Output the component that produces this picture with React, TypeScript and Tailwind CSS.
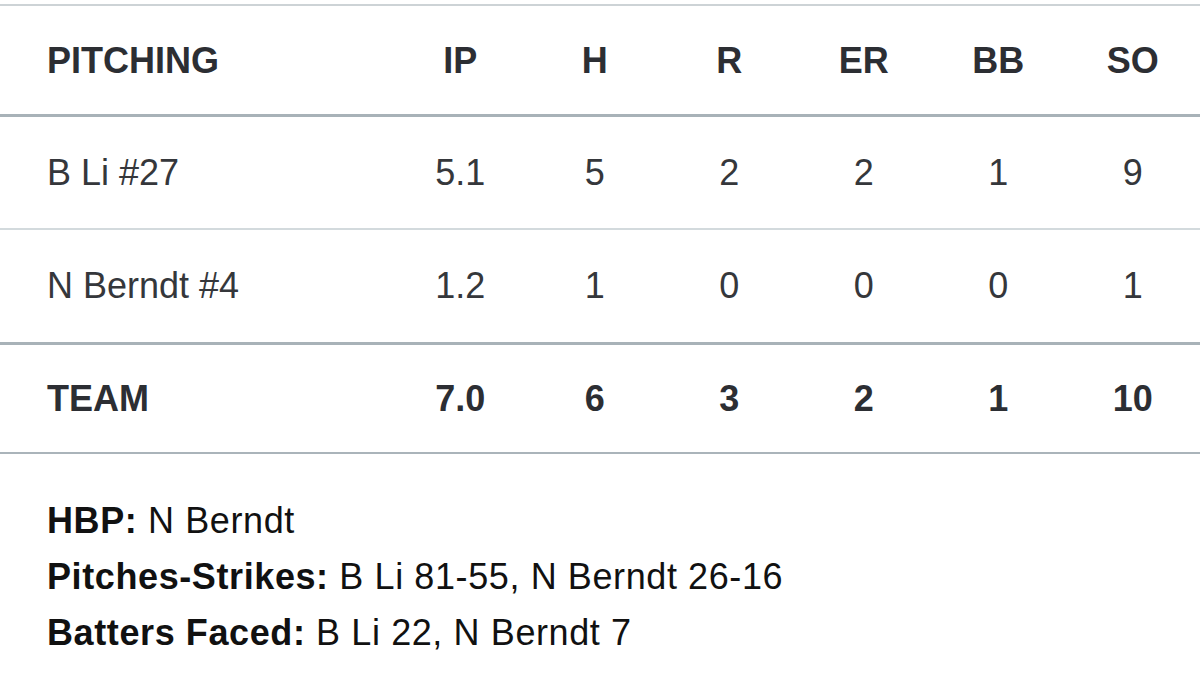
import React from 'react';

type Line = {
  name: string;
  stats: string[];
};

const columns = ['IP', 'H', 'R', 'ER', 'BB', 'SO'];

const pitchers: Line[] = [
  { name: 'B Li #27', stats: ['5.1', '5', '2', '2', '1', '9'] },
  { name: 'N Berndt #4', stats: ['1.2', '1', '0', '0', '0', '1'] },
];

const team: Line = { name: 'TEAM', stats: ['7.0', '6', '3', '2', '1', '10'] };

const notes = [
  { label: 'HBP:', text: 'N Berndt' },
  { label: 'Pitches-Strikes:', text: 'B Li 81-55, N Berndt 26-16' },
  { label: 'Batters Faced:', text: 'B Li 22, N Berndt 7' },
];

const rowGrid = 'grid grid-cols-[393px_repeat(6,1fr)] items-center';

export default function App() {
  return (
    <div
      className="w-[1200px] h-[697px] bg-white overflow-hidden pt-[4px]"
      style={{ fontFamily: '"Liberation Sans", Arial, sans-serif' }}
    >
      <div className="border-t-2 border-[#cdd3d6]">
        {/* header */}
        <div className={`${rowGrid} h-[111px] pt-[2px] border-b-[3px] border-[#a8b2b8] text-[36px] font-bold text-[#2c2e33]`}>
          <div className="pl-[47px]">PITCHING</div>
          {columns.map((c) => (
            <div key={c} className="text-center">{c}</div>
          ))}
        </div>

        {pitchers.map((p, i) => (
          <div
            key={p.name}
            className={`${rowGrid} text-[36px] text-[#35373b] ${
              i === 0
                ? 'h-[113px] border-b-2 border-[#d3dadd]'
                : 'h-[115px] border-b-[3px] border-[#a8b2b8]'
            }`}
          >
            <div className="pl-[47px]">{p.name}</div>
            {p.stats.map((s, j) => (
              <div key={j} className="text-center">{s}</div>
            ))}
          </div>
        ))}

        <div className={`${rowGrid} h-[109px] border-b-2 border-[#aab4ba] text-[36px] font-bold text-[#2c2e33]`}>
          <div className="pl-[47px]">{team.name}</div>
          {team.stats.map((s, j) => (
            <div key={j} className="text-center">{s}</div>
          ))}
        </div>
      </div>

      <div className="pl-[47px] pt-[39px] text-[36px] leading-[56px] tracking-[0.6px] text-[#111]">
        {notes.map((n) => (
          <div key={n.label}>
            <span className="font-bold">{n.label}</span> {n.text}
          </div>
        ))}
      </div>
    </div>
  );
}
